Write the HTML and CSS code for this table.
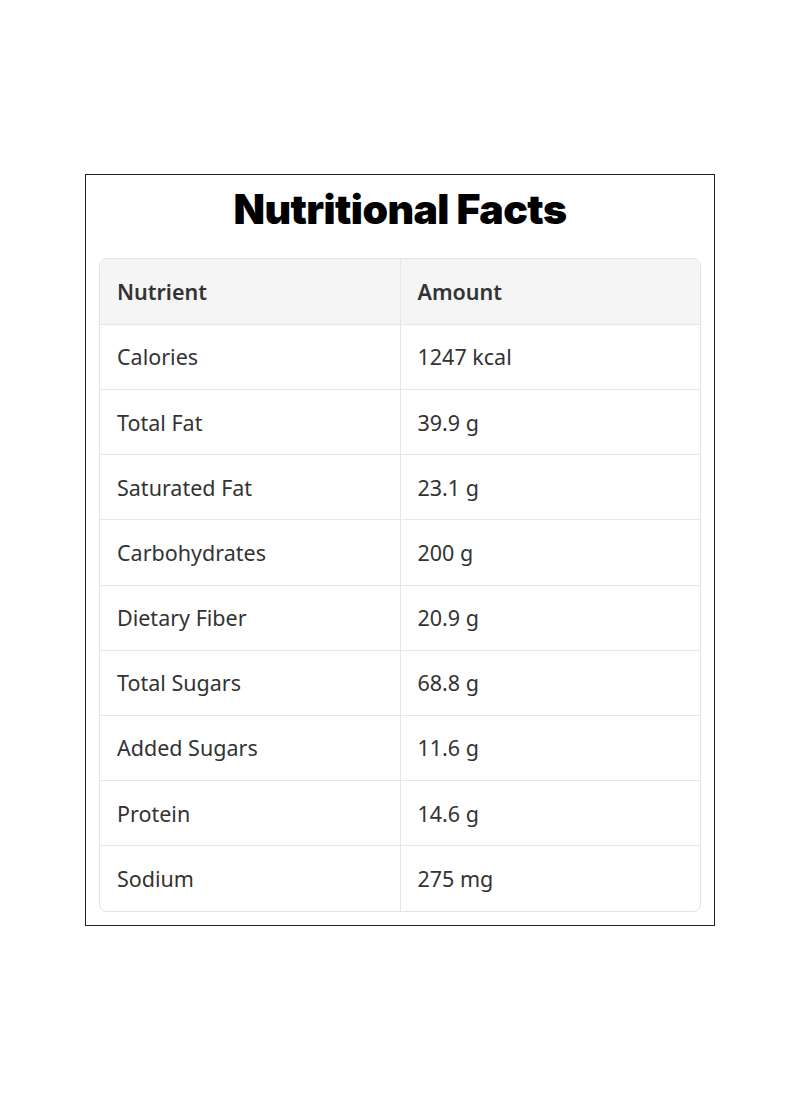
FILE: index.html
```html
<!DOCTYPE html>
<html lang="en">
<head>
    <meta charset="UTF-8">
    <meta name="viewport" content="width=device-width, initial-scale=1.0">
    <title>Nutritional Facts</title>
    <link rel="stylesheet" href="styles.css">
</head>
<body>
    <div class="facts-card">
        <h1>Nutritional Facts</h1>
        <div class="table-wrap">
            <table>
                <tr>
                    <th>Nutrient</th>
                    <th>Amount</th>
                </tr>
                <tr><td>Calories</td><td>1247 kcal</td></tr>
                <tr><td>Total Fat</td><td>39.9 g</td></tr>
                <tr><td>Saturated Fat</td><td>23.1 g</td></tr>
                <tr><td>Carbohydrates</td><td>200 g</td></tr>
                <tr><td>Dietary Fiber</td><td>20.9 g</td></tr>
                <tr><td>Total Sugars</td><td>68.8 g</td></tr>
                <tr><td>Added Sugars</td><td>11.6 g</td></tr>
                <tr><td>Protein</td><td>14.6 g</td></tr>
                <tr><td>Sodium</td><td>275 mg</td></tr>
            </table>
        </div>
    </div>
</body>
</html>
```

FILE: styles.css
```css
* {
    margin: 0;
    padding: 0;
    box-sizing: border-box;
}

body {
    font-family: "Noto Sans", sans-serif;
    background-color: #fff;
    display: flex;
    justify-content: center;
    align-items: center;
    min-height: 100vh;
}

.facts-card {
    width: 630px;
    border: 1px solid #222;
    padding: 13px 13px 13px;
    background-color: #fff;
}

.facts-card h1 {
    font-family: Inter, sans-serif;
    font-weight: 900;
    font-size: 41px;
    letter-spacing: -0.6px;
    text-align: center;
    color: #000;
    line-height: 42px;
    margin-bottom: 28px;
}

.table-wrap {
    border: 1px solid #e3e3e3;
    border-radius: 8px;
    overflow: hidden;
}

table {
    width: 100%;
    border-collapse: collapse;
    table-layout: fixed;
}

th, td {
    text-align: left;
    padding: 0 17px;
    height: 65.2px;
    font-size: 21.5px;
    color: #333;
    border-bottom: 1px solid #e6e6e6;
}

th + th, td + td {
    border-left: 1px solid #e6e6e6;
}

tr:last-child td {
    border-bottom: none;
}

th {
    background-color: #f5f5f5;
    font-weight: 600;
}

td {
    font-weight: 400;
}
```
